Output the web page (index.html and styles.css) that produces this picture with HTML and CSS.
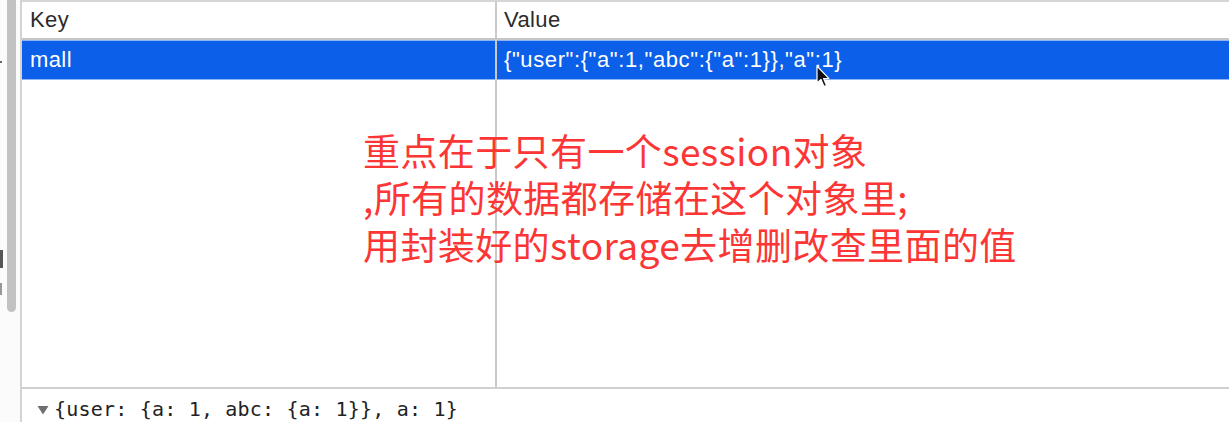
FILE: index.html
```html
<!DOCTYPE html>
<html lang="zh-CN">
<head>
<meta charset="utf-8">
<title>Session Storage</title>
<link rel="stylesheet" href="styles.css">
</head>
<body>
<div class="app">
  <div class="gutter">
    <div class="thumb"></div>
    <span class="mark mark-dot"></span>
    <span class="mark mark-a"></span>
    <span class="mark mark-b"></span>
  </div>
  <div class="panel">
    <div class="grid">
      <div class="col col-key">
        <div class="cell head">Key</div>
        <div class="cell row sel">mall</div>
        <div class="fill"></div>
      </div>
      <div class="col col-val">
        <div class="cell head">Value</div>
        <div class="cell row sel">{"user":{"a":1,"abc":{"a":1}},"a":1}</div>
        <div class="fill"></div>
      </div>
    </div>
    <div class="detail">
      <svg class="tri" width="12" height="10" viewBox="0 0 12 10"><path d="M0.5 1 L11.5 1 L6 9.5 Z" fill="#6f6f6f"/></svg>
      <span class="mono">{user: {a: 1, abc: {a: 1}}, a: 1}</span>
    </div>
  </div>
  <div class="note">重点在于只有一个session对象<br>,所有的数据都存储在这个对象里;<br>用封装好的storage去增删改查里面的值</div>
  <svg class="cursor" width="16" height="24" viewBox="0 0 16 24"><path d="M1 1 L1 18 L5 14.5 L8 21.5 L10.5 20.5 L7.6 13.6 L12.8 13.4 Z" fill="#111" stroke="#fff" stroke-width="1.2" stroke-linejoin="round"/></svg>
</div>
</body>
</html>
```
FILE: styles.css
```css
html, body {
  margin: 0;
  padding: 0;
  background: #fff;
}
.app {
  position: relative;
  width: 1229px;
  height: 422px;
  overflow: hidden;
  display: flex;
  font-family: "Liberation Sans", Arial, sans-serif;
}
.gutter {
  position: relative;
  width: 20px;
  flex: none;
  background: #fbfbfb;
}
.thumb {
  margin-left: 7px;
  width: 9px;
  height: 312px;
  background: #c2c2c2;
  border-radius: 0 0 5px 5px;
}
.mark {
  position: absolute;
  left: 0;
  background: #666;
}
.mark-dot { top: 61px; width: 2px; height: 2px; }
.mark-a { top: 250px; width: 3px; height: 18px; background: #555; }
.mark-b { top: 283px; width: 2px; height: 12px; background: #999; }
.panel {
  flex: 1;
  display: flex;
  flex-direction: column;
  border-left: 2px solid #d3d3d3;
}
.grid {
  display: flex;
  border-top: 2px solid #d6d6d6;
  border-bottom: 2px solid #d0d0d0;
  box-sizing: border-box;
  height: 389px;
}
.col {
  display: flex;
  flex-direction: column;
}
.col-key {
  width: 473px;
  border-right: 2px solid #c9c9c9;
}
.col-val {
  flex: 1;
}
.cell {
  font-size: 22px;
  letter-spacing: 0.4px;
  padding-left: 8px;
  white-space: nowrap;
  display: flex;
  align-items: center;
}
.head {
  height: 36px;
  color: #2b2b2b;
  border-bottom: 2px solid #c6c6c6;
}
.row {
  height: 38px;
  border-top: 1px solid #8fb6f2;
  border-bottom: 1px solid #8fb6f2;
}
.sel {
  background: #0b5fe8;
  color: #fff;
}
.col-val .cell {
  padding-left: 7px;
}
.col-val .row {
  letter-spacing: 0.6px;
}
.fill {
  flex: 1;
}
.detail {
  flex: 1;
  display: flex;
  align-items: center;
  padding-left: 15px;
  padding-top: 7px;
}
.tri {
  margin-right: 5px;
  margin-top: 2px;
}
.mono {
  font-family: "DejaVu Sans Mono", monospace;
  font-size: 20px;
  letter-spacing: 0.2px;
  color: #222;
}
.note {
  position: absolute;
  left: 363px;
  top: 127px;
  font-family: "Noto Sans CJK SC", "Noto Sans", sans-serif;
  font-size: 37px;
  line-height: 47px;
  letter-spacing: 0.4px;
  color: #fc3535;
  white-space: nowrap;
}
.cursor {
  position: absolute;
  left: 816px;
  top: 65px;
}
```
